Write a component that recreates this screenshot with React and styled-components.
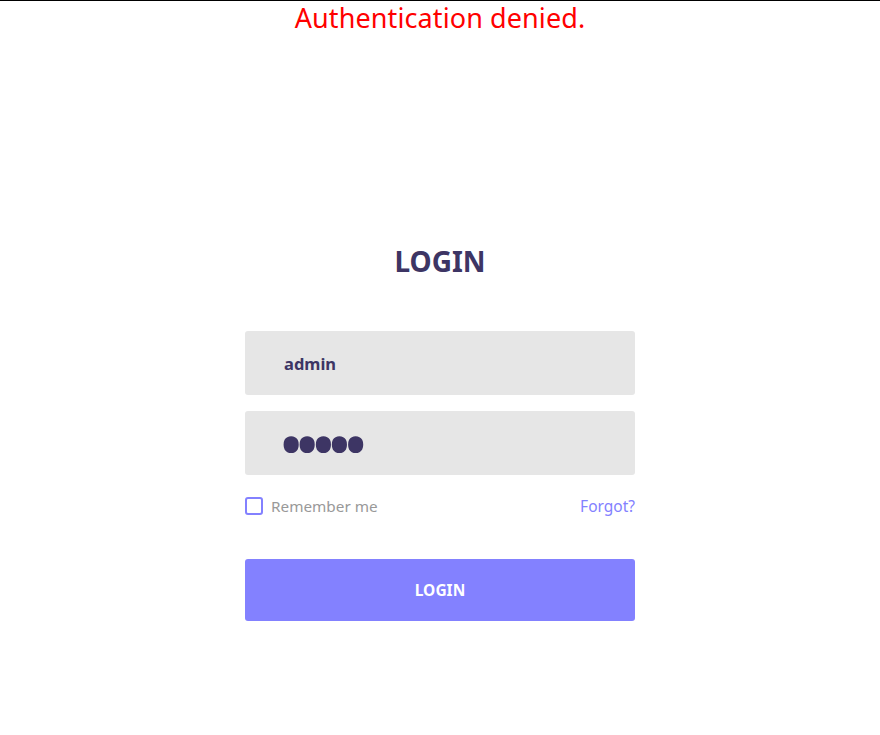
import React, { useState } from 'react';
import styled, { createGlobalStyle } from 'styled-components';

const GlobalStyle = createGlobalStyle`
  * { box-sizing: border-box; }
  body {
    margin: 0;
    background: #fff;
    font-family: "Noto Sans", "Open Sans", sans-serif;
  }
`;

const Page = styled.div`
  min-height: 100vh;
  border-top: 1px solid #000;
`;

const Alert = styled.p`
  margin: 0;
  text-align: center;
  color: #ff0000;
  font-size: 27px;
  line-height: 33px;
  letter-spacing: 0.1px;
`;

const Form = styled.form`
  width: 390px;
  margin: 206px auto 0;
  display: flex;
  flex-direction: column;
`;

const Title = styled.h1`
  margin: 0 0 49px;
  text-align: center;
  color: #3d3564;
  font-size: 28px;
  line-height: 42px;
  font-weight: 700;
`;

const Field = styled.input`
  height: 64px;
  width: 100%;
  border: none;
  border-radius: 3px;
  background: #e6e6e6;
  padding: 0 20px 0 ${p => (p.type === 'password' ? '36px' : '39px')};
  margin-bottom: 16px;
  color: #3d3564;
  font-family: inherit;
  font-size: ${p => (p.type === 'password' ? '54px' : '16.5px')};
  font-weight: 700;
  outline: none;
  letter-spacing: ${p => (p.type === 'password' ? '-4.2px' : '0')};
`;

const Options = styled.div`
  display: flex;
  align-items: center;
  justify-content: space-between;
  margin-top: 3px;
  height: 24px;
`;

const Remember = styled.label`
  display: flex;
  align-items: center;
  gap: 8px;
  color: #999;
  font-size: 15.3px;
  cursor: pointer;
`;

const Box = styled.span`
  width: 18px;
  height: 18px;
  border: 2px solid #8381ff;
  border-radius: 3px;
  background: ${p => (p.checked ? '#8381ff' : '#fff')};
`;

const Forgot = styled.a`
  color: #8381ff;
  font-size: 15.5px;
  text-decoration: none;
`;

const Submit = styled.button`
  margin-top: 41px;
  height: 62px;
  width: 100%;
  border: none;
  border-radius: 3px;
  background: #8381ff;
  color: #fff;
  font-family: inherit;
  font-size: 15.5px;
  font-weight: 700;
  cursor: pointer;
`;

export default function App() {
  const [user, setUser] = useState('admin');
  const [pass, setPass] = useState('admin');
  const [remember, setRemember] = useState(false);

  return (
    <Page>
      <GlobalStyle />
      <Alert>Authentication denied.</Alert>
      <Form onSubmit={e => e.preventDefault()}>
        <Title>LOGIN</Title>
        <Field type="text" value={user} onChange={e => setUser(e.target.value)} />
        <Field type="password" value={pass} onChange={e => setPass(e.target.value)} />
        <Options>
          <Remember onClick={() => setRemember(!remember)}>
            <Box checked={remember} />
            Remember me
          </Remember>
          <Forgot href="#">Forgot?</Forgot>
        </Options>
        <Submit type="submit">LOGIN</Submit>
      </Form>
    </Page>
  );
}
